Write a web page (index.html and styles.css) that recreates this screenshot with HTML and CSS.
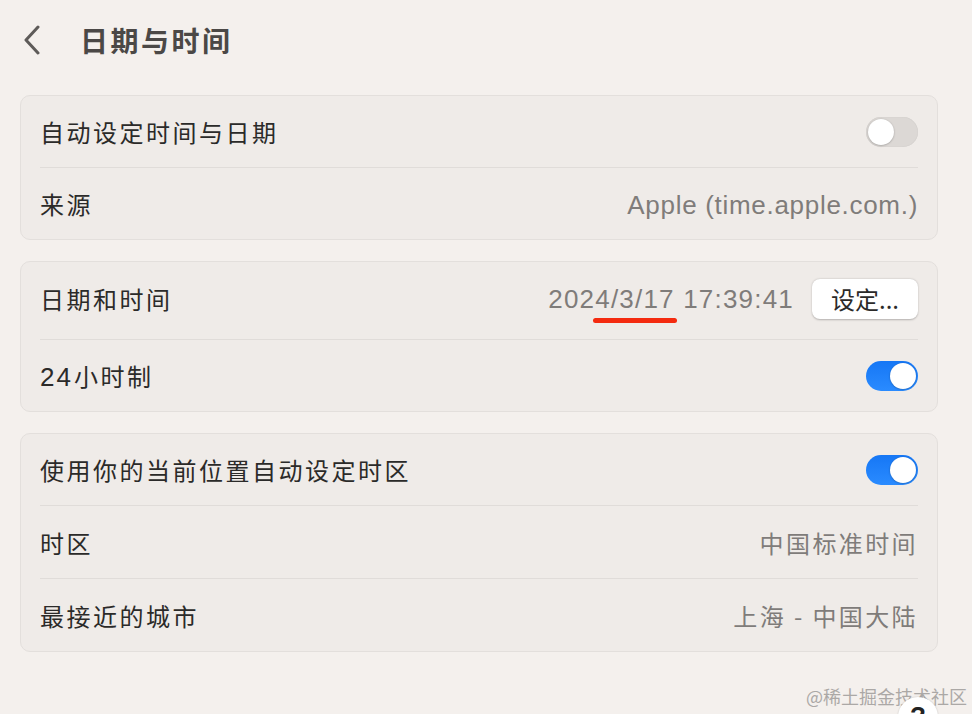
FILE: index.html
```html
<!DOCTYPE html>
<html lang="zh">
<head>
<meta charset="utf-8">
<title>日期与时间</title>
<link rel="stylesheet" href="styles.css">
</head>
<body>
<div class="page">
  <header class="header">
    <svg class="back" width="20" height="30" viewBox="0 0 20 30"><path d="M16 2 L4 15 L16 28" fill="none" stroke="#5e5b59" stroke-width="3" stroke-linecap="round" stroke-linejoin="round"/></svg>
    <h1 class="title">日期与时间</h1>
  </header>

  <section class="card">
    <div class="row">
      <span class="label">自动设定时间与日期</span>
      <span class="toggle off"><span class="knob"></span></span>
    </div>
    <div class="row">
      <span class="label">来源</span>
      <span class="value latin">Apple (time.apple.com.)</span>
    </div>
  </section>

  <section class="card">
    <div class="row tall">
      <span class="label">日期和时间</span>
      <span class="right">
        <span class="value latin datetime">2024/3/17 17:39:41<span class="mark"></span></span>
        <span class="btn">设定...</span>
      </span>
    </div>
    <div class="row">
      <span class="label"><span class="latin num">24</span>小时制</span>
      <span class="toggle on"><span class="knob"></span></span>
    </div>
  </section>

  <section class="card loose">
    <div class="row">
      <span class="label">使用你的当前位置自动设定时区</span>
      <span class="toggle on"><span class="knob"></span></span>
    </div>
    <div class="row">
      <span class="label">时区</span>
      <span class="value">中国标准时间</span>
    </div>
    <div class="row">
      <span class="label">最接近的城市</span>
      <span class="value">上海 - 中国大陆</span>
    </div>
  </section>
</div>
<div class="watermark">@稀土掘金技术社区</div>
<div class="help">?</div>
</body>
</html>
```
FILE: styles.css
```css
html, body {
  margin: 0;
  padding: 0;
  background: #f4f0ed;
  width: 972px;
  height: 714px;
  overflow: hidden;
  font-family: "Noto Sans CJK SC", "Noto Sans", sans-serif;
  color: #2b2a29;
}
.page {
  padding: 0 34px 0 20px;
  display: flex;
  flex-direction: column;
  gap: 21px;
}
.header {
  display: flex;
  align-items: center;
  height: 79px;
  padding-bottom: 4px;
  margin-bottom: -9px;
}
.back {
  margin-left: 2px;
  margin-right: 38px;
}
.title {
  margin: 0;
  font-size: 28px;
  font-weight: 700;
  color: #4b4846;
  letter-spacing: 2.5px;
}
.card {
  background: #efebe8;
  border: 1px solid #e3dfdc;
  border-radius: 10px;
  padding: 0 19px;
}
.row {
  height: 71px;
  display: flex;
  align-items: center;
  justify-content: space-between;
  border-top: 1px solid #e0dcd9;
}
.row:first-child { border-top: none; }
.card.loose .row + .row { height: 72px; }
.row.tall { height: 73px; padding-bottom: 4px; }
.label {
  font-size: 24px;
  letter-spacing: 2.5px;
  color: #2b2a29;
}
.num { font-size: 26px; letter-spacing: 2px; margin-right: 1px; }
.value {
  font-size: 24px;
  color: #7f7c7a;
  letter-spacing: 2.4px;
}
.latin {
  font-family: "Liberation Sans", "Noto Sans", sans-serif;
}
.value.latin {
  font-size: 26px;
  letter-spacing: 0.7px;
  padding-top: 3px;
}
.value.datetime {
  letter-spacing: 1.2px;
  padding-top: 2px;
  position: relative;
}
.right {
  display: flex;
  align-items: center;
  gap: 18px;
}
.mark {
  position: absolute;
  left: 45px;
  width: 84px;
  bottom: -8px;
  height: 5px;
  border-radius: 3px;
  background: #f42a0f;
}
.btn {
  background: #ffffff;
  border-radius: 8px;
  box-shadow: 0 0.5px 2px rgba(0,0,0,0.25);
  height: 40px;
  width: 106px;
  display: flex;
  align-items: center;
  justify-content: center;
  font-size: 24px;
  color: #2b2a29;
}
.toggle {
  width: 52px;
  height: 30px;
  border-radius: 15px;
  position: relative;
  box-sizing: border-box;
}
.toggle.off { background: #dcd8d5; box-shadow: inset 0 0 1px rgba(0,0,0,0.15); }
.toggle.on { background: linear-gradient(#1677f5, #2a8bff); }
.knob {
  position: absolute;
  top: 2px;
  width: 26px;
  height: 26px;
  border-radius: 50%;
  background: #ffffff;
  box-shadow: 0 0.5px 2px rgba(0,0,0,0.3);
}
.off .knob { left: 2px; }
.on .knob { right: 2px; }
.watermark {
  position: absolute;
  left: 806px;
  top: 683px;
  font-size: 18px;
  color: #9a9795;
  font-family: "Noto Sans CJK SC", sans-serif;
  opacity: 0.8;
}
.help {
  position: absolute;
  left: 898px;
  top: 697px;
  width: 40px;
  height: 40px;
  border-radius: 50%;
  background: #ffffff;
  box-shadow: 0 0 2px rgba(0,0,0,0.2);
  font-family: "Liberation Sans", sans-serif;
  font-weight: 700;
  font-size: 26px;
  color: #222;
  text-align: center;
  line-height: 38px;
}
```
